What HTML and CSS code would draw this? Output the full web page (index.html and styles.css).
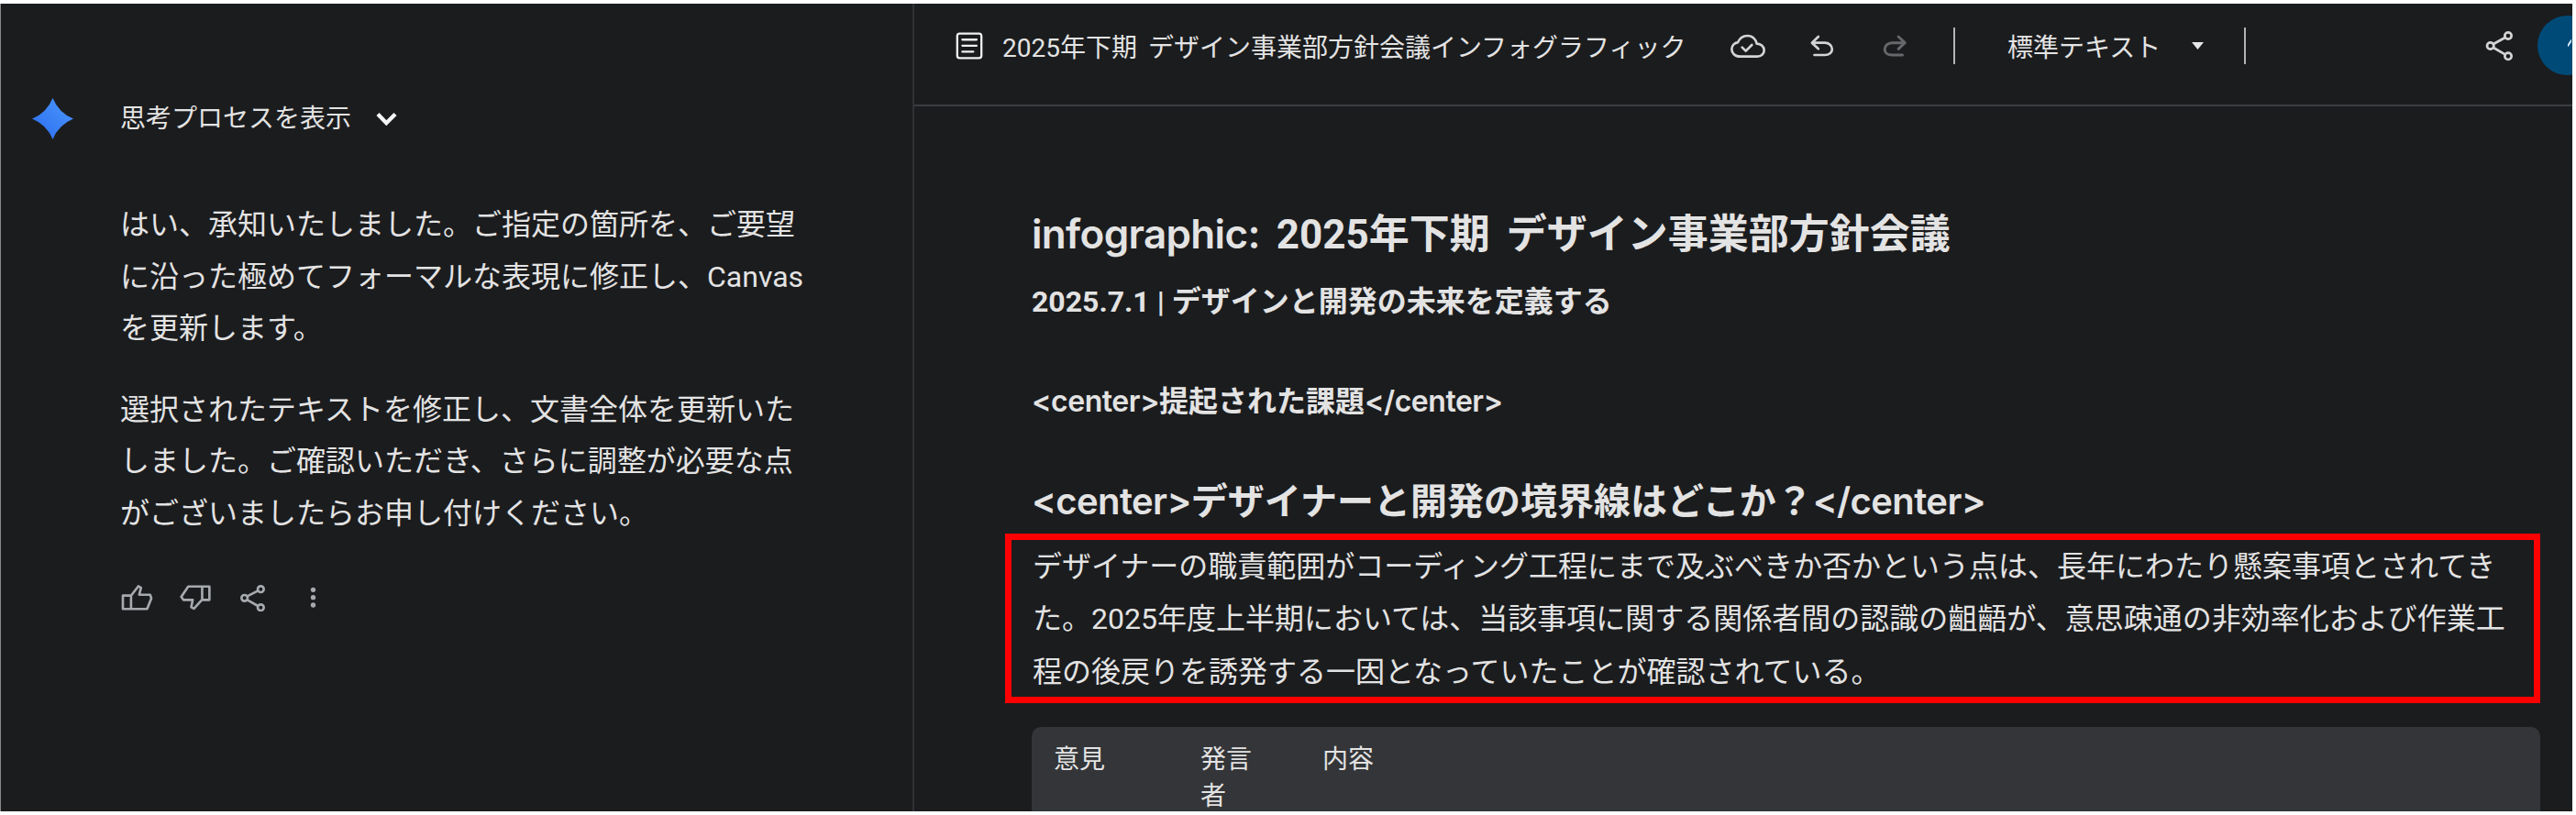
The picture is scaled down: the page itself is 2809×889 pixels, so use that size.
FILE: index.html
```html
<!DOCTYPE html>
<html lang="ja">
<head>
	<meta charset="UTF-8">
	<title>2025年下期 デザイン事業部方針会議インフォグラフィック</title>
	<link rel="stylesheet" href="styles.css">
</head>
<body>
<div class="app">
	<div class="chat">
		<div class="thinking">
			<svg class="star" viewBox="0 0 45 45">
				<defs>
					<linearGradient id="starfill" x1="0" y1="1" x2="1" y2="0">
						<stop offset="0" stop-color="#2a6cf0"/>
						<stop offset="1" stop-color="#4c98fb"/>
					</linearGradient>
				</defs>
				<path fill="url(#starfill)" d="M22.5 0Q29 16 45 22.5Q29 29 22.5 45Q16 29 0 22.5Q16 16 22.5 0Z"/>
			</svg>
			<span class="thinking-label">思考プロセスを表示</span>
			<svg class="chevron" viewBox="1228 122 69 44"><path d="M1234 129L1262 158L1291 129"/></svg>
		</div>
		<div class="answer">
			<p>はい、承知いたしました。ご指定の箇所を、ご要望に沿った極めてフォーマルな表現に修正し、Canvasを更新します。</p>
			<p>選択されたテキストを修正し、文書全体を更新いたしました。ご確認いただき、さらに調整が必要な点がございましたらお申し付けください。</p>
		</div>
		<div class="actions">
			<svg class="thumb" viewBox="92 78 106 90"><path d="M98 116H125L149 85L158 90L152 113H188L192 125L178 160H98ZM125 116V160"/></svg>
			<svg class="thumb" viewBox="288 82 106 90"><path d="M316 90H386V134H361L335 163L326 158L331 134H300L293 124ZM362 90V134"/></svg>
			<svg class="action-share" viewBox="486 78 84 90"><circle cx="553" cy="95" r="10"/><circle cx="500" cy="124" r="10"/><circle cx="553" cy="155" r="10"/><path d="M509 118L544 100M509 130L544 150"/></svg>
			<svg class="dots" viewBox="715 90 20 72"><circle cx="725" cy="100" r="8"/><circle cx="725" cy="125" r="8"/><circle cx="725" cy="150" r="8"/></svg>
		</div>
	</div>
	<div class="canvas">
		<div class="toolbar">
			<svg class="doc-icon" viewBox="66 41 90 91"><rect x="71" y="46" width="80" height="81" rx="8"/><path d="M88 66H135M88 86H135M88 106H124"/></svg>
			<span class="doc-title">2025年下期 デザイン事業部方針会議インフォグラフィック</span>
			<svg class="cloud" viewBox="48 48 114 78"><path d="M80 122C62 122 52 110 52 98C52 85 63 76 72 76C78 62 90 54 103 54C122 54 132 68 134 80C148 80 158 90 158 102C158 114 148 122 136 122Z"/><path d="M86 92L98 104L118 84"/></svg>
			<svg class="undo" viewBox="308 56 80 72"><path d="M337 62L316 82L337 102M318 82H358C372 82 382 92 382 103C382 114 372 122 358 122H324"/></svg>
			<svg class="redo" viewBox="548 56 80 72"><path d="M599 62L620 82L599 102M618 82H578C564 82 554 92 554 103C554 114 564 122 578 122H612"/></svg>
			<span class="tool-sep first"></span>
			<span class="style-name">標準テキスト</span>
			<svg class="caret" viewBox="0 0 13 8"><path d="M0 0H13L6.5 8Z"/></svg>
			<span class="tool-sep second"></span>
			<svg class="top-share" viewBox="90 94 96 108"><circle cx="168" cy="115" r="11"/><circle cx="110" cy="148" r="11"/><circle cx="168" cy="182" r="11"/><path d="M120 142L158 121M120 154L158 176"/></svg>
			<div class="avatar"><svg viewBox="0 0 4 8"><path d="M0 7L4 1"/></svg></div>
		</div>
		<div class="doc">
			<h1><span class="latin">infographic:</span> 2025年下期 デザイン事業部方針会議</h1>
			<h2>2025.7.1 | デザインと開発の未来を定義する</h2>
			<h3><span class="latin">&lt;center&gt;</span>提起された課題<span class="latin">&lt;/center&gt;</span></h3>
			<h4><span class="latin">&lt;center&gt;</span>デザイナーと開発の境界線はどこか？<span class="latin">&lt;/center&gt;</span></h4>
			<div class="marked">
				<p>デザイナーの職責範囲がコーディング工程にまで及ぶべきか否かという点は、長年にわたり懸案事項とされてきた。2025年度上半期においては、当該事項に関する関係者間の認識の齟齬が、意思疎通の非効率化および作業工程の後戻りを誘発する一因となっていたことが確認されている。</p>
				<div class="red-box"></div>
			</div>
			<table class="opinions">
				<tr>
					<th class="col-opinion">意見</th>
					<th class="col-speaker">発言者</th>
					<th>内容</th>
				</tr>
			</table>
		</div>
	</div>
</div>
</body>
</html>
```

FILE: styles.css
```css
* {
	margin: 0;
	padding: 0;
	box-sizing: border-box;
}

html, body {
	height: 100%;
	overflow: hidden;
	background: #fff;
}

body {
	padding: 4px 4px 4px 0;
	font-family: "Roboto", "Noto Sans CJK JP", sans-serif;
	color: #e3e3e3;
}

.app {
	display: flex;
	height: 881px;
	background: #1b1c1e;
	border-left: 1px solid #8a8a8a;
	overflow: hidden;
}

svg {
	display: block;
	flex: none;
	fill: none;
}

/* left column */
.chat {
	flex: none;
	width: 996px;
	padding: 103px 0 0 34px;
	border-right: 2px solid #303134;
}

.thinking {
	display: flex;
	align-items: center;
	height: 45px;
}

.star {
	width: 45px;
	height: 45px;
}

.thinking-label {
	margin-left: 51px;
	font-size: 28px;
	line-height: 40px;
}

.chevron {
	width: 23px;
	height: 15px;
	margin-left: 27px;
	stroke: #f6f6f6;
	stroke-width: 13;
}

.answer {
	margin: 65px 0 0 96px;
	width: 750px;
	font-size: 32px;
	line-height: 56.5px;
}

.answer p + p {
	margin-top: 32px;
}

.actions {
	display: flex;
	align-items: center;
	margin: 48px 0 0 97px;
	height: 32px;
}

.actions svg {
	stroke: #a6a9ae;
	stroke-width: 8;
	stroke-linejoin: round;
}

.thumb {
	width: 35px;
	height: 30px;
	margin-right: 29px;
}

.actions .action-share {
	width: 28px;
	height: 30px;
	margin-left: 2px;
}

.actions .dots {
	width: 7px;
	height: 24px;
	margin-left: 48px;
	fill: #a6a9ae;
	stroke: none;
}

/* right column */
.canvas {
	flex: 1;
	min-width: 0;
}

.toolbar {
	display: flex;
	align-items: center;
	height: 112px;
	padding: 13px 0 32px 45px;
	border-bottom: 2px solid #3c3d40;
}

.toolbar svg {
	stroke-linejoin: round;
	stroke-linecap: round;
}

.doc-icon {
	width: 30px;
	height: 30px;
	stroke: #f0f0f0;
	stroke-width: 7;
}

.doc-title {
	width: 744px;
	margin-left: 21px;
	font-size: 28px;
	word-spacing: 5px;
	white-space: nowrap;
}

.cloud {
	width: 38px;
	height: 26px;
	margin-left: 50px;
	stroke: #d4d4d4;
	stroke-width: 8;
}

.undo, .redo {
	width: 27px;
	height: 24px;
}

.undo {
	margin-left: 48px;
	stroke: #d4d4d4;
	stroke-width: 8;
}

.redo {
	margin-left: 53px;
	stroke: #66676a;
	stroke-width: 9;
}

.tool-sep {
	flex: none;
	width: 2px;
	height: 40px;
	background: #b4b4b4;
}

.tool-sep.first {
	margin-left: 50px;
}

.tool-sep.second {
	margin-left: 44px;
}

.style-name {
	margin-left: 57px;
	font-size: 28px;
	white-space: nowrap;
}

.caret {
	width: 13px;
	height: 8px;
	margin-left: 34px;
	fill: #e8e8e8;
}

.top-share {
	width: 32px;
	height: 36px;
	margin-left: 260px;
	stroke: #d4d4d4;
	stroke-width: 8;
}

.avatar {
	flex: none;
	width: 65px;
	height: 65px;
	margin-left: 26px;
	border-radius: 50%;
	background: #004a77;
	padding: 26px 0 0 33px;
}

.avatar svg {
	width: 4px;
	height: 8px;
	stroke: #d7ecff;
	stroke-width: 2;
}

.doc {
	margin-left: 128px;
	width: 1645px;
}

.doc h1, .doc h2, .doc h3, .doc h4 {
	font-weight: 700;
}

.latin {
	font-family: "Inter", "Noto Sans CJK JP", sans-serif;
	font-weight: 600;
	letter-spacing: -0.015em;
}

.doc h1 {
	margin-top: 107px;
	font-size: 44px;
	line-height: 64px;
	word-spacing: 7px;
}

.doc h2 {
	margin-top: 16px;
	font-size: 32px;
	line-height: 50px;
}

.doc h3 {
	margin-top: 59px;
	font-size: 32px;
	line-height: 50px;
}

.doc h4 {
	margin-top: 54px;
	font-size: 40px;
	line-height: 60px;
}

.marked {
	position: relative;
	margin-top: 12px;
	font-size: 32px;
	line-height: 57.3px;
}

.marked p {
	width: 1637px;
	padding-left: 1px;
}

/* annotation drawn on top of the paragraph */
.red-box {
	position: absolute;
	top: -8px;
	bottom: -5px;
	left: -29px;
	right: 0;
	border: 7px solid #ff0000;
}

.opinions {
	width: 100%;
	height: 120px;
	margin-top: 31px;
	table-layout: fixed;
	border-collapse: separate;
	border-spacing: 0;
	background: #333538;
	border-radius: 10px 10px 0 0;
}

.opinions th {
	padding: 16px 28px 0 24px;
	font-size: 28px;
	line-height: 40px;
	font-weight: 400;
	text-align: left;
	vertical-align: top;
}

.col-opinion {
	width: 160px;
}

.col-speaker {
	width: 133px;
}
```
